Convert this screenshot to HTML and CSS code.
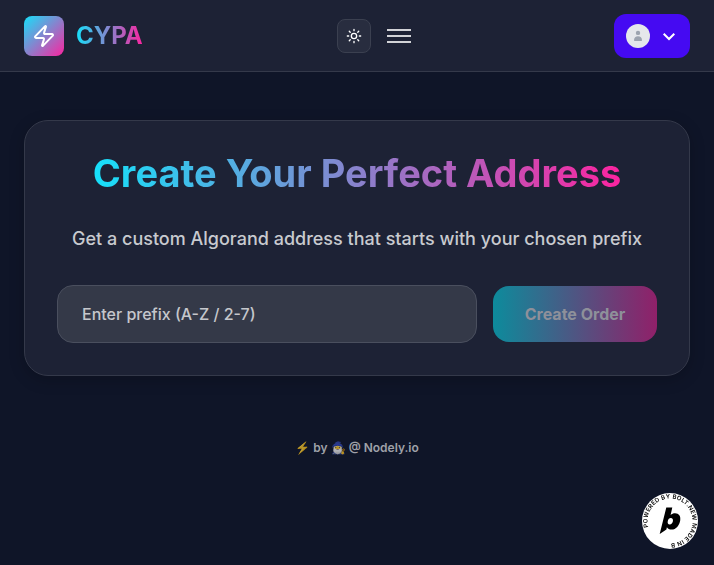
FILE: index.html
```html
<!DOCTYPE html>
<html lang="en">
<head>
    <meta charset="UTF-8">
    <meta name="viewport" content="width=device-width, initial-scale=1.0">
    <title>CYPA</title>
    <link rel="stylesheet" href="styles.css">
</head>
<body>
    <header class="header">
        <a href="#" class="brand">
            <span class="logo">
                <svg width="24" height="24" viewBox="0 0 24 24" fill="none" stroke="white" stroke-width="2" stroke-linecap="round" stroke-linejoin="round">
                    <path d="M4 14a1 1 0 0 1-.78-1.63l9.9-10.2a.5.5 0 0 1 .86.46l-1.92 6.02A1 1 0 0 0 13 10h7a1 1 0 0 1 .78 1.63l-9.9 10.2a.5.5 0 0 1-.86-.46l1.92-6.02A1 1 0 0 0 11 14z"/>
                </svg>
            </span>
            <span class="brand-name">CYPA</span>
        </a>

        <nav class="nav">
            <button class="theme-btn" aria-label="Toggle theme">
                <svg width="16" height="16" viewBox="0 0 24 24" fill="none" stroke="currentColor" stroke-width="2" stroke-linecap="round" stroke-linejoin="round">
                    <circle cx="12" cy="12" r="4"/>
                    <path d="M12 2v2M12 20v2M4.93 4.93l1.41 1.41M17.66 17.66l1.41 1.41M2 12h2M20 12h2M6.34 17.66l-1.41 1.41M19.07 4.93l-1.41 1.41"/>
                </svg>
            </button>
            <button class="menu-btn" aria-label="Menu">
                <span></span>
                <span></span>
                <span></span>
            </button>
        </nav>

        <button class="wallet-btn" aria-label="Account">
            <svg class="avatar" width="24" height="24" viewBox="0 0 24 24">
                <circle cx="12" cy="12" r="12" fill="#e5e7eb"/>
                <circle cx="12" cy="8.9" r="2.2" fill="#9ca3af"/>
                <path d="M8 16.3c0-2.6 1.6-4 4-4s4 1.400 4 4c0 .5-.2.7-.7.7H8.700c-.5 0-.7-.2-.7-.7z" fill="#9ca3af"/>
            </svg>
            <svg width="14" height="14" viewBox="0 0 14 14" fill="none" stroke="white" stroke-width="2">
                <path d="M1.700 4.800L7 10l5.300-5.200"/>
            </svg>
        </button>
    </header>

    <main class="main">
        <section class="card">
            <h1>Create Your Perfect Address</h1>
            <p class="subtitle">Get a custom Algorand address that starts with your chosen prefix</p>
            <form class="form">
                <input type="text" class="prefix-input" placeholder="Enter prefix (A-Z / 2-7)">
                <button type="button" class="order-btn" disabled>Create Order</button>
            </form>
        </section>
    </main>

    <footer class="footer">
        <span class="emoji">⚡</span> by <span class="emoji">🧙‍♂️</span> @ Nodely.io
    </footer>

    <a href="#" class="bolt-badge" aria-label="Powered by Bolt.new">
        <svg width="56" height="56" viewBox="0 0 56 56">
            <defs>
                <path id="ring" d="M28 50.500a22.500 22.500 0 1 1 .01 0"/>
            </defs>
            <circle cx="28" cy="28" r="28" fill="white"/>
            <text class="ring-text"><textPath href="#ring" startOffset="29" textLength="140">POWERED BY BOLT.NEW MADE IN BOLT.NEW</textPath></text>
            <path fill="black" fill-rule="evenodd" d="M24.300 14.500h6l-1.700 7.600c1.300-1.300 2.700-1.900 4.500-1.900 3.800 0 5.900 2.900 5.100 7.200-.8 5-4.200 9.100-8.600 9.100-2.200 0-3.800-.8-4.700-2.300l-.5 2.300-6.700 4.400zM28.800 25.100c-1.500 0-2.600 1-3 2.900-.5 2.100.2 3.500 1.900 3.500s2.800-1.200 3.200-3.200c.4-1.900-.4-3.200-2.100-3.200z"/>
        </svg>
    </a>
</body>
</html>
```
FILE: styles.css
```css
* {
    box-sizing: border-box;
}
body {
    margin: 0;
    min-height: 565px;
    font-family: Inter, sans-serif;
    background-color: #0f1528;
    color: white;
}
button {
    font-family: inherit;
    border: none;
    padding: 0;
    cursor: pointer;
}
.header {
    display: flex;
    align-items: center;
    justify-content: space-between;
    height: 72px;
    padding: 0 24px;
    background-color: #1d2235;
    border-bottom: 1px solid #34394a;
}
.brand {
    display: flex;
    align-items: center;
    gap: 12px;
    text-decoration: none;
}
.logo {
    display: flex;
    align-items: center;
    justify-content: center;
    width: 40px;
    height: 40px;
    border-radius: 8px;
    background: linear-gradient(135deg, #16e0fa, #fb24a0);
}
.brand-name {
    font-size: 24px;
    font-weight: 700;
    line-height: 32px;
    background: linear-gradient(to right, #16e0fa, #fb24a0);
    -webkit-background-clip: text;
    background-clip: text;
    color: transparent;
}
.nav {
    display: flex;
    align-items: center;
    gap: 16px;
    margin-left: -8px;
}
.theme-btn {
    display: flex;
    align-items: center;
    justify-content: center;
    width: 34px;
    height: 34px;
    border: 1px solid #3b4050;
    border-radius: 8px;
    background-color: #282d3f;
    color: white;
}
.menu-btn {
    display: flex;
    flex-direction: column;
    gap: 4px;
    width: 24px;
    background: none;
}
.menu-btn span {
    height: 2px;
    background-color: #d2d3d7;
}
.wallet-btn {
    display: flex;
    align-items: center;
    gap: 12px;
    width: 76px;
    height: 44px;
    padding: 0 12px;
    border-radius: 12px;
    background-color: #450af2;
}
.main {
    padding: 48px 24px 0;
}
.card {
    height: 256px;
    padding: 28px 32px 32px;
    border: 1px solid #34394a;
    border-radius: 24px;
    background-color: #1d2235;
    box-shadow: 0 4px 16px rgba(0, 0, 0, 0.2);
    text-align: center;
}
h1 {
    width: fit-content;
    margin: 0 auto;
    font-size: 38px;
    font-weight: 700;
    line-height: 48px;
    background: linear-gradient(to right, #16e0fa, #fb24a0);
    -webkit-background-clip: text;
    background-clip: text;
    color: transparent;
}
.subtitle {
    margin: 28px 0 32px;
    font-size: 18px;
    font-weight: 500;
    line-height: 28px;
    color: #c8cacf;
}
.form {
    display: flex;
    align-items: center;
    gap: 16px;
}
.prefix-input {
    flex: 1;
    min-width: 0;
    height: 58px;
    padding: 0 24px;
    border: 1px solid #4a4f5e;
    border-radius: 16px;
    background-color: #343948;
    color: white;
    font-family: inherit;
    font-size: 16px;
    font-weight: 500;
}
.prefix-input::placeholder {
    color: #c5c7cc;
}
.order-btn {
    width: 164px;
    height: 56px;
    border-radius: 16px;
    background: linear-gradient(to right, #0d8b9c, #902069);
    color: #8e909a;
    font-size: 16px;
    font-weight: 700;
}
.footer {
    margin-top: 64px;
    text-align: center;
    font-size: 12px;
    font-weight: 600;
    line-height: 16px;
    color: #9fa1a9;
}
.emoji {
    opacity: 0.7;
}
.bolt-badge {
    position: fixed;
    right: 16px;
    bottom: 16px;
    width: 56px;
    height: 56px;
}
.bolt-badge svg {
    display: block;
}
.ring-text {
    font-size: 6px;
    font-weight: 600;
}
```
